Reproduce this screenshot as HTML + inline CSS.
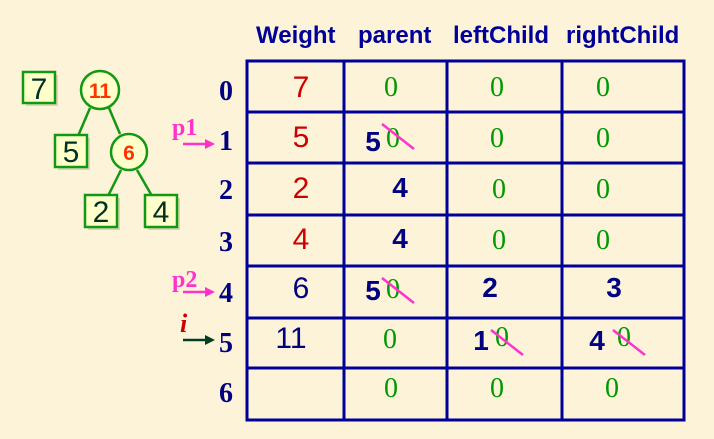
<!DOCTYPE html>
<html><head><meta charset="utf-8"><style>
html,body{margin:0;padding:0;width:714px;height:439px;overflow:hidden;background:#fcf3d9;}
svg{display:block}
.h{font:bold 24px "Liberation Sans",sans-serif;fill:#000099}
.r{font:30px "Liberation Sans",sans-serif;fill:#cc0000;text-anchor:middle}
.n{font:30px "Liberation Sans",sans-serif;fill:#000080;text-anchor:middle}
.b{font:bold 28px "Liberation Sans",sans-serif;fill:#000080;text-anchor:middle}
.g{font:28px "Liberation Serif",serif;fill:#009900;text-anchor:middle}
.l{font:bold 28px "Liberation Serif",serif;fill:#000080;text-anchor:middle}
.p{font:bold 24px "Liberation Serif",serif;fill:#ff33cc}
.t{font:30px "Liberation Sans",sans-serif;fill:#003020;text-anchor:middle}
.c{font:bold 21px "Liberation Sans",sans-serif;fill:#ff3300;text-anchor:middle}
</style></head><body>
<svg width="714" height="439" viewBox="0 0 714 439">
<text class="h" x="256" y="43">Weight</text>
<text class="h" x="358" y="43">parent</text>
<text class="h" x="453" y="43">leftChild</text>
<text class="h" x="566" y="43">rightChild</text>
<g stroke="#000099" stroke-width="3" fill="none">
<rect x="247" y="61" width="437" height="359"/>
<line x1="344" y1="61" x2="344" y2="420"/>
<line x1="447" y1="61" x2="447" y2="420"/>
<line x1="562" y1="61" x2="562" y2="420"/>
<line x1="247" y1="112" x2="684" y2="112"/>
<line x1="247" y1="163" x2="684" y2="163"/>
<line x1="247" y1="215" x2="684" y2="215"/>
<line x1="247" y1="266" x2="684" y2="266"/>
<line x1="247" y1="318" x2="684" y2="318"/>
<line x1="247" y1="368" x2="684" y2="368"/>
</g>
<text class="l" x="226" y="100">0</text>
<text class="l" x="226" y="150">1</text>
<text class="l" x="226" y="199">2</text>
<text class="l" x="226" y="251">3</text>
<text class="l" x="226" y="302">4</text>
<text class="l" x="226" y="352">5</text>
<text class="l" x="226" y="402">6</text>
<text class="p" x="172" y="135">p1</text>
<line x1="183" y1="144" x2="208" y2="144" stroke="#ff33cc" stroke-width="2.5"/>
<polygon points="205,139 215,144 205,149" fill="#ff33cc"/>
<text class="p" x="172" y="287">p2</text>
<line x1="183" y1="292" x2="208" y2="292" stroke="#ff33cc" stroke-width="2.5"/>
<polygon points="205,287 215,292 205,297" fill="#ff33cc"/>
<text x="180" y="332" style="font:italic bold 26px 'Liberation Serif',serif;fill:#cc0000">i</text>
<line x1="183" y1="340" x2="208" y2="340" stroke="#004020" stroke-width="2.5"/>
<polygon points="205,335 215,340 205,345" fill="#004020"/>
<text class="r" x="301" y="97">7</text>
<text class="g" x="391" y="96">0</text>
<text class="g" x="497" y="96">0</text>
<text class="g" x="603" y="96">0</text>
<text class="r" x="301" y="147">5</text>
<text class="b" x="373" y="151">5</text>
<text class="g" x="393" y="147">0</text>
<line x1="382" y1="124" x2="414" y2="149" stroke="#ff33cc" stroke-width="2.5"/>
<text class="g" x="497" y="147">0</text>
<text class="g" x="603" y="147">0</text>
<text class="r" x="301" y="198">2</text>
<text class="b" x="400" y="197">4</text>
<text class="g" x="499" y="198">0</text>
<text class="g" x="603" y="198">0</text>
<text class="r" x="301" y="249">4</text>
<text class="b" x="400" y="248">4</text>
<text class="g" x="499" y="249">0</text>
<text class="g" x="603" y="249">0</text>
<text class="n" x="301" y="298">6</text>
<text class="b" x="373" y="300">5</text>
<text class="g" x="393" y="298">0</text>
<line x1="382" y1="278" x2="414" y2="303" stroke="#ff33cc" stroke-width="2.5"/>
<text class="b" x="490" y="297">2</text>
<text class="b" x="614" y="297">3</text>
<text class="n" x="291" y="348">11</text>
<text class="g" x="390" y="348">0</text>
<text class="b" x="481" y="350">1</text>
<text class="g" x="502" y="346">0</text>
<line x1="491" y1="330" x2="523" y2="355" stroke="#ff33cc" stroke-width="2.5"/>
<text class="b" x="597" y="350">4</text>
<text class="g" x="624" y="346">0</text>
<line x1="613" y1="330" x2="645" y2="355" stroke="#ff33cc" stroke-width="2.5"/>
<text class="g" x="391" y="397">0</text>
<text class="g" x="497" y="397">0</text>
<text class="g" x="612" y="397">0</text>
<g stroke="#119911" stroke-width="2.5">
<line x1="90" y1="108" x2="78" y2="136"/>
<line x1="109" y1="108" x2="120" y2="134"/>
<line x1="121" y1="170" x2="108" y2="196"/>
<line x1="137" y1="170" x2="152" y2="196"/>
</g>
<g fill="#c8c0a0" opacity="0.6">
<rect x="26" y="75" width="32" height="31"/>
<rect x="58" y="138" width="32" height="32"/>
<rect x="88" y="198" width="32" height="32"/>
<rect x="148" y="198" width="32" height="32"/>
</g>
<g fill="#ffffcc" stroke="#119911" stroke-width="2.5">
<rect x="23" y="72" width="32" height="31"/>
<rect x="55" y="135" width="32" height="32"/>
<rect x="85" y="195" width="32" height="32"/>
<rect x="145" y="195" width="32" height="32"/>
<circle cx="100" cy="90" r="19"/>
<circle cx="129" cy="152" r="18"/>
</g>
<text class="t" x="39" y="99">7</text>
<text class="t" x="71" y="162">5</text>
<text class="t" x="101" y="222">2</text>
<text class="t" x="161" y="222">4</text>
<text class="c" x="100" y="98">11</text>
<text class="c" x="129" y="160">6</text>
</svg>
</body></html>
